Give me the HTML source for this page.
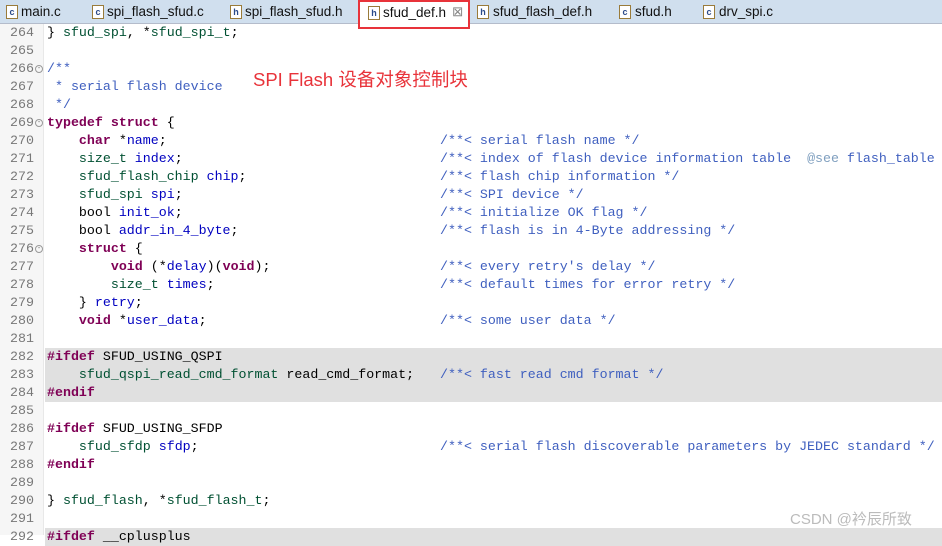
<!DOCTYPE html>
<html><head><meta charset="utf-8"><style>
*{margin:0;padding:0;box-sizing:border-box}
body{width:942px;height:535px;overflow:hidden;background:#fff;position:relative;font-family:"Liberation Sans",sans-serif}
#tabs{position:absolute;left:0;top:0;width:942px;height:24px;background:#d0dfee;border-bottom:1px solid #b4bccb}
.t{position:absolute;top:4px;font-size:13.5px;color:#111}
.ic{position:absolute;top:5px;width:12px;height:14px;border:1px solid #9a7b3a;background:#fff;font-size:9px;font-weight:bold;color:#2a4a8a;line-height:12px;text-align:center;font-family:"Liberation Sans",sans-serif}
#act{position:absolute;left:358px;top:0;width:112px;height:29px;background:#fff;border:2px solid #e8333a}
#gut{position:absolute;left:0;top:24px;width:44px;height:511px;background:#f6f6f6;border-right:1px solid #e8e8e8}
.ln{position:absolute;left:10px;font-family:"Liberation Mono",monospace;font-size:13.3px;color:#787878;height:18px;line-height:18px}
.c{position:absolute;left:47px;white-space:pre;font-family:"Liberation Mono",monospace;font-size:13.3px;height:18px;line-height:18px;color:#000}
.m{position:absolute;left:440px;white-space:pre;font-family:"Liberation Mono",monospace;font-size:13.3px;height:18px;line-height:18px;color:#3f5fbf}
.hl{position:absolute;left:45px;width:897px;background:#e0e0e0}
.k{color:#7f0055;font-weight:bold}.ty{color:#005032}.v{color:#0000c0}.cm{color:#3f5fbf}.tag{color:#7f9fbf}.pp{color:#7f0055;font-weight:bold}
.fold{position:absolute;left:35px;width:8px;height:8px;border:1px solid #999;border-radius:50%;font-size:7px;line-height:6px;text-align:center;color:#666}
</style></head><body>
<div id="tabs">
<div class="ic" style="left:6px">c</div><div class="t" style="left:21px">main.c</div>
<div class="ic" style="left:92px">c</div><div class="t" style="left:107px">spi_flash_sfud.c</div>
<div class="ic" style="left:230px">h</div><div class="t" style="left:245px">spi_flash_sfud.h</div>
<div class="ic" style="left:477px">h</div><div class="t" style="left:493px">sfud_flash_def.h</div>
<div class="ic" style="left:619px">c</div><div class="t" style="left:635px">sfud.h</div>
<div class="ic" style="left:703px">c</div><div class="t" style="left:719px">drv_spi.c</div>
</div>
<div id="act"><div class="ic" style="left:8px;top:4px">h</div><div class="t" style="left:23px;top:3px">sfud_def.h</div><div class="t" style="left:92px;top:2px;color:#888">⊠</div></div>
<div id="gut"></div>
<div class="hl" style="top:348px;height:54px"></div>
<div class="hl" style="top:528px;height:18px"></div>
<div style="position:absolute;left:253px;top:66px;font-size:18.5px;color:#e8333a;font-family:'Liberation Sans','Noto Sans CJK SC',sans-serif">SPI Flash 设备对象控制块</div>
<div style="position:absolute;left:790px;top:508px;font-size:15px;color:#bbb;font-family:'Liberation Sans','Noto Sans CJK SC',sans-serif">CSDN @衿辰所致</div>

<div class="ln" style="top:24px">264</div><div class="c" style="top:24px">} <span class="ty">sfud_spi</span>, *<span class="ty">sfud_spi_t</span>;</div>
<div class="ln" style="top:42px">265</div>
<div class="ln" style="top:60px">266</div><div class="fold" style="top:65px">-</div><div class="c cm" style="top:60px">/**</div>
<div class="ln" style="top:78px">267</div><div class="c cm" style="top:78px"> * serial flash device</div>
<div class="ln" style="top:96px">268</div><div class="c cm" style="top:96px"> */</div>
<div class="ln" style="top:114px">269</div><div class="fold" style="top:119px">-</div><div class="c" style="top:114px"><span class="k">typedef struct</span> {</div>
<div class="ln" style="top:132px">270</div><div class="c" style="top:132px">    <span class="k">char</span> *<span class="v">name</span>;</div><div class="m" style="top:132px">/**&lt; serial flash name */</div>
<div class="ln" style="top:150px">271</div><div class="c" style="top:150px">    <span class="ty">size_t</span> <span class="v">index</span>;</div><div class="m" style="top:150px">/**&lt; index of flash device information table  <span class="tag">@see</span> flash_table</div>
<div class="ln" style="top:168px">272</div><div class="c" style="top:168px">    <span class="ty">sfud_flash_chip</span> <span class="v">chip</span>;</div><div class="m" style="top:168px">/**&lt; flash chip information */</div>
<div class="ln" style="top:186px">273</div><div class="c" style="top:186px">    <span class="ty">sfud_spi</span> <span class="v">spi</span>;</div><div class="m" style="top:186px">/**&lt; SPI device */</div>
<div class="ln" style="top:204px">274</div><div class="c" style="top:204px">    bool <span class="v">init_ok</span>;</div><div class="m" style="top:204px">/**&lt; initialize OK flag */</div>
<div class="ln" style="top:222px">275</div><div class="c" style="top:222px">    bool <span class="v">addr_in_4_byte</span>;</div><div class="m" style="top:222px">/**&lt; flash is in 4-Byte addressing */</div>
<div class="ln" style="top:240px">276</div><div class="fold" style="top:245px">-</div><div class="c" style="top:240px">    <span class="k">struct</span> {</div>
<div class="ln" style="top:258px">277</div><div class="c" style="top:258px">        <span class="k">void</span> (*<span class="v">delay</span>)(<span class="k">void</span>);</div><div class="m" style="top:258px">/**&lt; every retry's delay */</div>
<div class="ln" style="top:276px">278</div><div class="c" style="top:276px">        <span class="ty">size_t</span> <span class="v">times</span>;</div><div class="m" style="top:276px">/**&lt; default times for error retry */</div>
<div class="ln" style="top:294px">279</div><div class="c" style="top:294px">    } <span class="v">retry</span>;</div>
<div class="ln" style="top:312px">280</div><div class="c" style="top:312px">    <span class="k">void</span> *<span class="v">user_data</span>;</div><div class="m" style="top:312px">/**&lt; some user data */</div>
<div class="ln" style="top:330px">281</div>
<div class="ln" style="top:348px">282</div><div class="c" style="top:348px"><span class="pp">#ifdef</span> SFUD_USING_QSPI</div>
<div class="ln" style="top:366px">283</div><div class="c" style="top:366px">    <span class="ty">sfud_qspi_read_cmd_format</span> read_cmd_format;</div><div class="m" style="top:366px">/**&lt; fast read cmd format */</div>
<div class="ln" style="top:384px">284</div><div class="c" style="top:384px"><span class="pp">#endif</span></div>
<div class="ln" style="top:402px">285</div>
<div class="ln" style="top:420px">286</div><div class="c" style="top:420px"><span class="pp">#ifdef</span> SFUD_USING_SFDP</div>
<div class="ln" style="top:438px">287</div><div class="c" style="top:438px">    <span class="ty">sfud_sfdp</span> <span class="v">sfdp</span>;</div><div class="m" style="top:438px">/**&lt; serial flash discoverable parameters by JEDEC standard */</div>
<div class="ln" style="top:456px">288</div><div class="c" style="top:456px"><span class="pp">#endif</span></div>
<div class="ln" style="top:474px">289</div>
<div class="ln" style="top:492px">290</div><div class="c" style="top:492px">} <span class="ty">sfud_flash</span>, *<span class="ty">sfud_flash_t</span>;</div>
<div class="ln" style="top:510px">291</div>
<div class="ln" style="top:528px">292</div><div class="c" style="top:528px"><span class="pp">#ifdef</span> __cplusplus</div>
</body></html>
